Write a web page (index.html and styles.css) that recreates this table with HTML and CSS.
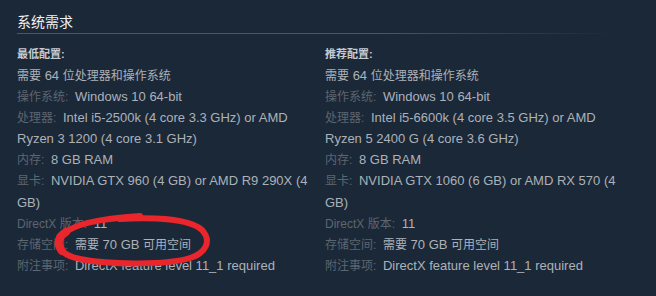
FILE: index.html
```html
<!DOCTYPE html>
<html lang="zh">
<head>
<meta charset="utf-8">
<link rel="stylesheet" href="styles.css">
</head>
<body>
<div class="page">
  <h2 class="title">系统需求</h2>
  <div class="rule"></div>
  <div class="cols">
    <div class="col">
      <div class="head">最低配置:</div>
      <ul class="list">
        <li><span class="zh">需要</span> 64 <span class="zh">位处理器和操作系统</span></li>
        <li><span class="lab">操作系统:</span> Windows 10 64-bit</li>
        <li><span class="lab">处理器:</span> Intel i5-2500k (4 core 3.3 GHz) or AMD Ryzen 3 1200 (4 core 3.1 GHz)</li>
        <li><span class="lab">内存:</span> 8 GB RAM</li>
        <li><span class="lab">显卡:</span> NVIDIA GTX 960 (4 GB) or AMD R9 290X (4 GB)</li>
        <li><span class="lab">DirectX 版本:</span> 11</li>
        <li><span class="lab">存储空间:</span> <span class="zh">需要</span> 70 GB <span class="zh">可用空间</span></li>
        <li><span class="lab">附注事项:</span> DirectX feature level 11_1 required</li>
      </ul>
    </div>
    <div class="col">
      <div class="head">推荐配置:</div>
      <ul class="list">
        <li><span class="zh">需要</span> 64 <span class="zh">位处理器和操作系统</span></li>
        <li><span class="lab">操作系统:</span> Windows 10 64-bit</li>
        <li><span class="lab">处理器:</span> Intel i5-6600k (4 core 3.5 GHz) or AMD Ryzen 5 2400 G (4 core 3.6 GHz)</li>
        <li><span class="lab">内存:</span> 8 GB RAM</li>
        <li><span class="lab">显卡:</span> NVIDIA GTX 1060 (6 GB) or AMD RX 570 (4 GB)</li>
        <li><span class="lab">DirectX 版本:</span> 11</li>
        <li><span class="lab">存储空间:</span> <span class="zh">需要</span> 70 GB <span class="zh">可用空间</span></li>
        <li><span class="lab">附注事项:</span> DirectX feature level 11_1 required</li>
      </ul>
    </div>
  </div>
  <svg class="mark" width="170" height="70" viewBox="0 0 170 70">
    <path d="M70 14 C 105 12, 140 14, 152 25 C 162 36, 156 48, 140 53 C 118 60, 60 60, 30 54 C 10 50, 4 40, 14 29 C 22 20, 45 14, 90 11" fill="none" stroke="#e8262b" stroke-width="6" stroke-linecap="round"/>
    <path d="M12 46 C 6 38, 8 32, 16 27" fill="none" stroke="#e8262b" stroke-width="8" stroke-linecap="round"/>
  </svg>
</div>
</body>
</html>
```
FILE: styles.css
```css
html, body {
  margin: 0;
  padding: 0;
  background: #1b2838;
}
.page {
  position: relative;
  width: 656px;
  height: 296px;
  padding: 13px 0 0 17px;
  box-sizing: border-box;
  font-family: "Liberation Sans", "Noto Sans CJK SC", sans-serif;
}
.title {
  margin: 0;
  font-size: 14px;
  font-weight: normal;
  color: #f2f2f2;
  line-height: 19px;
}
.rule {
  margin-top: 1px;
  width: 600px;
  height: 1px;
  background: linear-gradient(to right, #3f5b73 0%, #3f5b73 60%, rgba(63,91,115,0) 100%);
}
.cols {
  display: flex;
  gap: 8px;
  margin-top: 12px;
}
.col {
  width: 300px;
}
.head {
  font-size: 11px;
  font-weight: bold;
  color: #c6cbd0;
  line-height: 16px;
}
.list {
  list-style: none;
  margin: 3px 0 0;
  padding: 0;
  font-size: 13px;
  line-height: 21.1px;
  color: #acb2b8;
}
.zh {
  font-size: 12px;
  line-height: 12px;
}
.lab {
  font-size: 12px;
  line-height: 12px;
  margin-right: 3px;
  color: #5c6670;
}
.mark {
  position: absolute;
  left: 50px;
  top: 205px;
}
```
